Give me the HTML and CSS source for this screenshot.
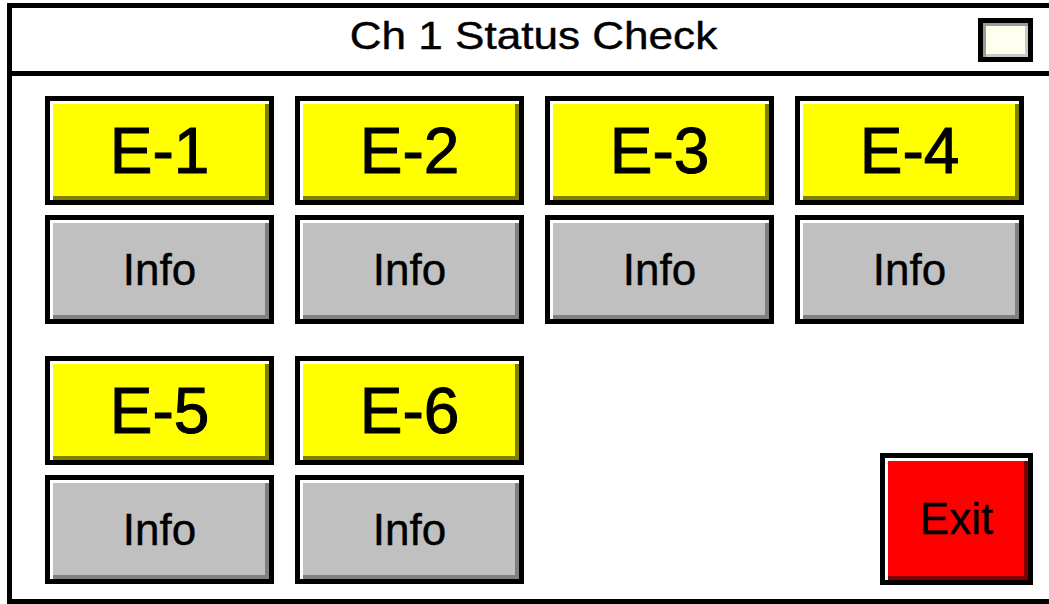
FILE: index.html
```html
<!DOCTYPE html>
<html lang="en">
<head>
    <meta charset="UTF-8">
    <meta name="viewport" content="width=device-width, initial-scale=1.0">
    <title>Ch 1 Status Check</title>
    <link rel="stylesheet" href="styles.css">
</head>
<body>
    <div class="panel">
        <div class="header">
            <span class="spacer"></span>
            <h1 class="title">Ch 1 Status Check</h1>
            <span class="check"></span>
        </div>

        <div class="content">
            <div class="group">
                <button type="button" class="btn btn-yellow label-big">E-1</button>
                <button type="button" class="btn btn-gray">Info</button>
            </div>
            <div class="group">
                <button type="button" class="btn btn-yellow label-big">E-2</button>
                <button type="button" class="btn btn-gray">Info</button>
            </div>
            <div class="group">
                <button type="button" class="btn btn-yellow label-big">E-3</button>
                <button type="button" class="btn btn-gray">Info</button>
            </div>
            <div class="group">
                <button type="button" class="btn btn-yellow label-big">E-4</button>
                <button type="button" class="btn btn-gray">Info</button>
            </div>
            <div class="group">
                <button type="button" class="btn btn-yellow label-big">E-5</button>
                <button type="button" class="btn btn-gray">Info</button>
            </div>
            <div class="group">
                <button type="button" class="btn btn-yellow label-big">E-6</button>
                <button type="button" class="btn btn-gray">Info</button>
            </div>
            <button type="button" class="btn btn-red exit">Exit</button>
        </div>
    </div>
</body>
</html>
```

FILE: styles.css
```css
body {
    margin: 0;
    background: #fff;
    font-family: "Liberation Sans", Arial, sans-serif;
    overflow: hidden;
}

.panel {
    margin: 3px 0 0 7px;
    height: 601px;
    box-sizing: border-box;
    border: 5px solid #000;
    border-right: none;
}

.header {
    height: 68px;
    box-sizing: border-box;
    border-bottom: 5px solid #000;
    display: grid;
    grid-template-columns: 1fr auto 1fr;
    align-items: center;
    padding: 0 16px 0 22px;
}

.title {
    margin: 0 0 6px 0;
    font-size: 38px;
    font-weight: normal;
    color: #000;
    transform: scaleX(1.16);
    -webkit-text-stroke: 0.4px #000;
}

.check {
    justify-self: end;
    width: 55px;
    height: 44px;
    box-sizing: border-box;
    border: 5px solid #000;
    background: #fffff0;
    box-shadow: inset 3px 3px 0 #9a9a9a, inset -3px -3px 0 #c8c8c8;
}

.content {
    padding: 20px 0 0 33px;
    display: grid;
    grid-template-columns: repeat(4, 229px);
    column-gap: 21px;
    row-gap: 32px;
}

.group {
    display: flex;
    flex-direction: column;
    gap: 10px;
}

.btn {
    appearance: none;
    margin: 0;
    padding: 0;
    height: 109px;
    box-sizing: border-box;
    border: 5px solid #000;
    font-family: inherit;
    font-size: 44px;
    color: #000;
    -webkit-text-stroke: 0.4px #000;
    display: flex;
    align-items: center;
    justify-content: center;
    cursor: pointer;
}

.label-big {
    font-size: 64px;
    -webkit-text-stroke: 1px #000;
}

.btn-yellow {
    background: #ffff00;
    box-shadow: inset 3px 3px 0 #fff, inset -4px -4px 0 #808000;
}

.btn-gray {
    background: #c0c0c0;
    box-shadow: inset 3px 3px 0 #fff, inset -4px -4px 0 #808080;
}

.btn-red {
    background: #ff0000;
    box-shadow: inset 3px 3px 0 #fff, inset -4px -4px 0 #800000;
}

.exit {
    grid-column: 3 / 5;
    grid-row: 2;
    justify-self: end;
    align-self: end;
    width: 153px;
    height: 132px;
    margin: 0 -9px -1px 0;
}
```
